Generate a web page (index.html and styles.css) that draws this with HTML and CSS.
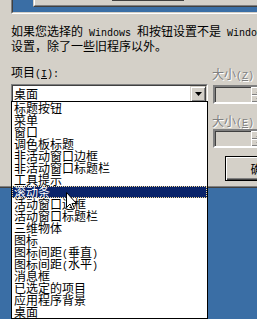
FILE: index.html
```html
<!DOCTYPE html>
<html lang="zh-CN">
<head>
  <meta charset="UTF-8">
  <meta name="viewport" content="width=device-width, initial-scale=1.0">
  <title>外观</title>
  <link rel="stylesheet" href="styles.css">
</head>
<body>
  <div class="dialog">
    <!-- Preview frame (bottom edge only is visible) -->
    <div class="preview">
      <div class="preview-inner">
        <div class="mini-window">
          <div class="mini-inner"><div class="mini-button"></div></div>
        </div>
      </div>
    </div>

    <p class="note">如果您选择的<span class="lat"> Windows </span>和按钮设置不是<span class="lat"> Windows</span><br>设置，除了一些旧程序以外。</p>

    <div class="main">
      <div class="left">
        <div class="label">项目<span class="lat">(<u>I</u>):</span></div>
        <div class="combo">
          <div class="combo-inner">
            <span>桌面</span>
            <span class="combo-btn">
              <svg width="7" height="4" viewBox="0 0 7 4"><polygon points="0,0 7,0 3.5,4" fill="#000"/></svg>
            </span>
          </div>
        </div>
      </div>

      <div class="right">
        <div class="label disabled first">大小<span class="lat">(<u>Z</u>)</span></div>
        <div class="spin">
          <div class="spin-btns"><span class="spin-half"></span><span class="spin-half"></span></div>
        </div>
        <div class="label disabled second">大小<span class="lat">(<u>E</u>)</span></div>
        <div class="spin spin-low">
          <div class="spin-btns"><span class="spin-half"></span><span class="spin-half"></span></div>
        </div>
        <button class="ok">确定</button>
      </div>
    </div>
  </div>

  <!-- Open drop-down list of the combo box -->
  <ul class="list">
    <li>标题按钮</li>
    <li>菜单</li>
    <li>窗口</li>
    <li>调色板标题</li>
    <li>非活动窗口边框</li>
    <li>非活动窗口标题栏</li>
    <li>工具提示</li>
    <li class="selected">滚动条</li>
    <li>活动窗口边框</li>
    <li>活动窗口标题栏</li>
    <li>三维物体</li>
    <li>图标</li>
    <li>图标间距<span class="lat">(</span>垂直<span class="lat">)</span></li>
    <li>图标间距<span class="lat">(</span>水平<span class="lat">)</span></li>
    <li>消息框</li>
    <li>已选定的项目</li>
    <li>应用程序背景</li>
    <li>桌面</li>
  </ul>

  <svg class="cursor" width="12" height="19" viewBox="0 0 12 19">
    <path d="M0.5 0.5 L0.5 15.5 L4 12 L6.5 17.5 L8.5 16.5 L6 11.5 L10.5 11.5 Z" fill="#fff" stroke="#000" stroke-width="1"/>
  </svg>
</body>
</html>
```

FILE: styles.css
```css
/* General */
body {
  margin: 0;
  width: 257px;
  height: 319px;
  overflow: hidden;
  position: relative;
  background: #3a6ea5;
  font-family: "Noto Sans CJK SC", sans-serif;
  font-size: 12px;
  line-height: 12px;
  color: #000;
}

.lat {
  font-family: "Liberation Mono", monospace;
  font-size: 10px;
  white-space: pre;
}

.disabled {
  color: #808080;
  text-shadow: 1px 1px #fff;
}

/* Dialog body */
.dialog {
  height: 188px;
  box-sizing: border-box;
  background: #d4d0c8;
  border-bottom: 1px solid #404040;
  box-shadow: inset 0 -1px #808080;
  overflow: hidden;
}

/* Preview */
.preview {
  margin-left: 11px;
  height: 14px;
  box-sizing: border-box;
  border-left: 1px solid #808080;
  border-bottom: 1px solid #fff;
}

.preview-inner {
  height: 13px;
  box-sizing: border-box;
  border-left: 1px solid #404040;
  border-bottom: 1px solid #d4d0c8;
  background: #3a6ea5;
  padding-left: 20px;
}

.mini-window {
  height: 7px;
  box-sizing: border-box;
  border-left: 1px solid #d4d0c8;
  border-bottom: 1px solid #404040;
}

.mini-inner {
  height: 6px;
  box-sizing: border-box;
  border-left: 1px solid #fff;
  border-bottom: 1px solid #808080;
  background: #d4d0c8;
  padding-left: 77px;
}

.mini-button {
  width: 72px;
  height: 1px;
  background: #404040;
}

/* Description */
.note {
  margin: 11px 0 0;
  padding-left: 11px;
  white-space: nowrap;
}

/* Controls */
.main {
  display: flex;
  gap: 5px;
  margin-top: 14px;
  padding-left: 11px;
}

.left {
  width: 197px;
  flex: none;
}

.label {
  height: 12px;
  white-space: nowrap;
}

.combo {
  margin-top: 6px;
  height: 20px;
  box-sizing: border-box;
  border: 1px solid;
  border-color: #808080 #fff #fff #808080;
}

.combo-inner {
  height: 18px;
  box-sizing: border-box;
  border: 1px solid;
  border-color: #404040 #d4d0c8 #d4d0c8 #404040;
  background: #fff;
  padding-left: 1px;
  display: flex;
  align-items: center;
  justify-content: space-between;
}

.combo-btn {
  width: 16px;
  height: 16px;
  box-sizing: border-box;
  background: #d4d0c8;
  border: 1px solid;
  border-color: #d4d0c8 #404040 #404040 #d4d0c8;
  box-shadow: inset 1px 1px #fff, inset -1px -1px #808080;
  display: flex;
  align-items: center;
  justify-content: center;
}

.right {
  display: flex;
  flex-direction: column;
  align-items: flex-start;
}

.right .first {
  margin: 2px 0 0 -1px;
}

.right .second {
  margin: 11px 0 0 -1px;
}

.spin {
  margin-top: 5px;
  width: 60px;
  height: 19px;
  box-sizing: border-box;
  border: 2px solid;
  border-color: #808080 #fff #fff #808080;
  box-shadow: inset 1px 1px #404040;
  background: #d4d0c8;
  display: flex;
}

.spin-low {
  margin-top: 2px;
}

.spin-btns {
  margin-left: 36px;
  width: 16px;
  display: flex;
  flex-direction: column;
}

.spin-half {
  flex: 1;
  border-left: 1px solid #fff;
  border-top: 1px solid #fff;
  box-shadow: inset 0 -1px #808080;
  position: relative;
}

.spin-half::after {
  content: "";
  position: absolute;
  left: 4px;
  top: 2px;
  border-left: 3px solid transparent;
  border-right: 3px solid transparent;
  border-bottom: 3px solid #808080;
}

.spin-half + .spin-half::after {
  border-bottom: 0;
  border-top: 3px solid #808080;
}

.ok {
  margin: 8px 0 0 12px;
  width: 75px;
  height: 25px;
  padding: 0;
  box-sizing: border-box;
  border: 1px solid #000;
  background: #d4d0c8;
  box-shadow: inset 1px 1px #fff, inset -1px -1px #404040, inset -2px -2px #808080;
  font: inherit;
  color: #000;
  text-align: center;
}

/* Drop-down list */
.list {
  position: absolute;
  left: 11px;
  top: 101px;
  width: 197px;
  margin: 0;
  padding: 0;
  list-style: none;
  box-sizing: border-box;
  border: 1px solid #000;
  background: #fff;
}

.list li {
  height: 12px;
  padding-left: 2px;
  white-space: nowrap;
}

.list .selected {
  background: #0a246a;
  color: #fff;
  outline: 1px dotted #f5db95;
  outline-offset: -1px;
}

/* Mouse pointer */
.cursor {
  position: absolute;
  left: 66px;
  top: 192px;
}
```
